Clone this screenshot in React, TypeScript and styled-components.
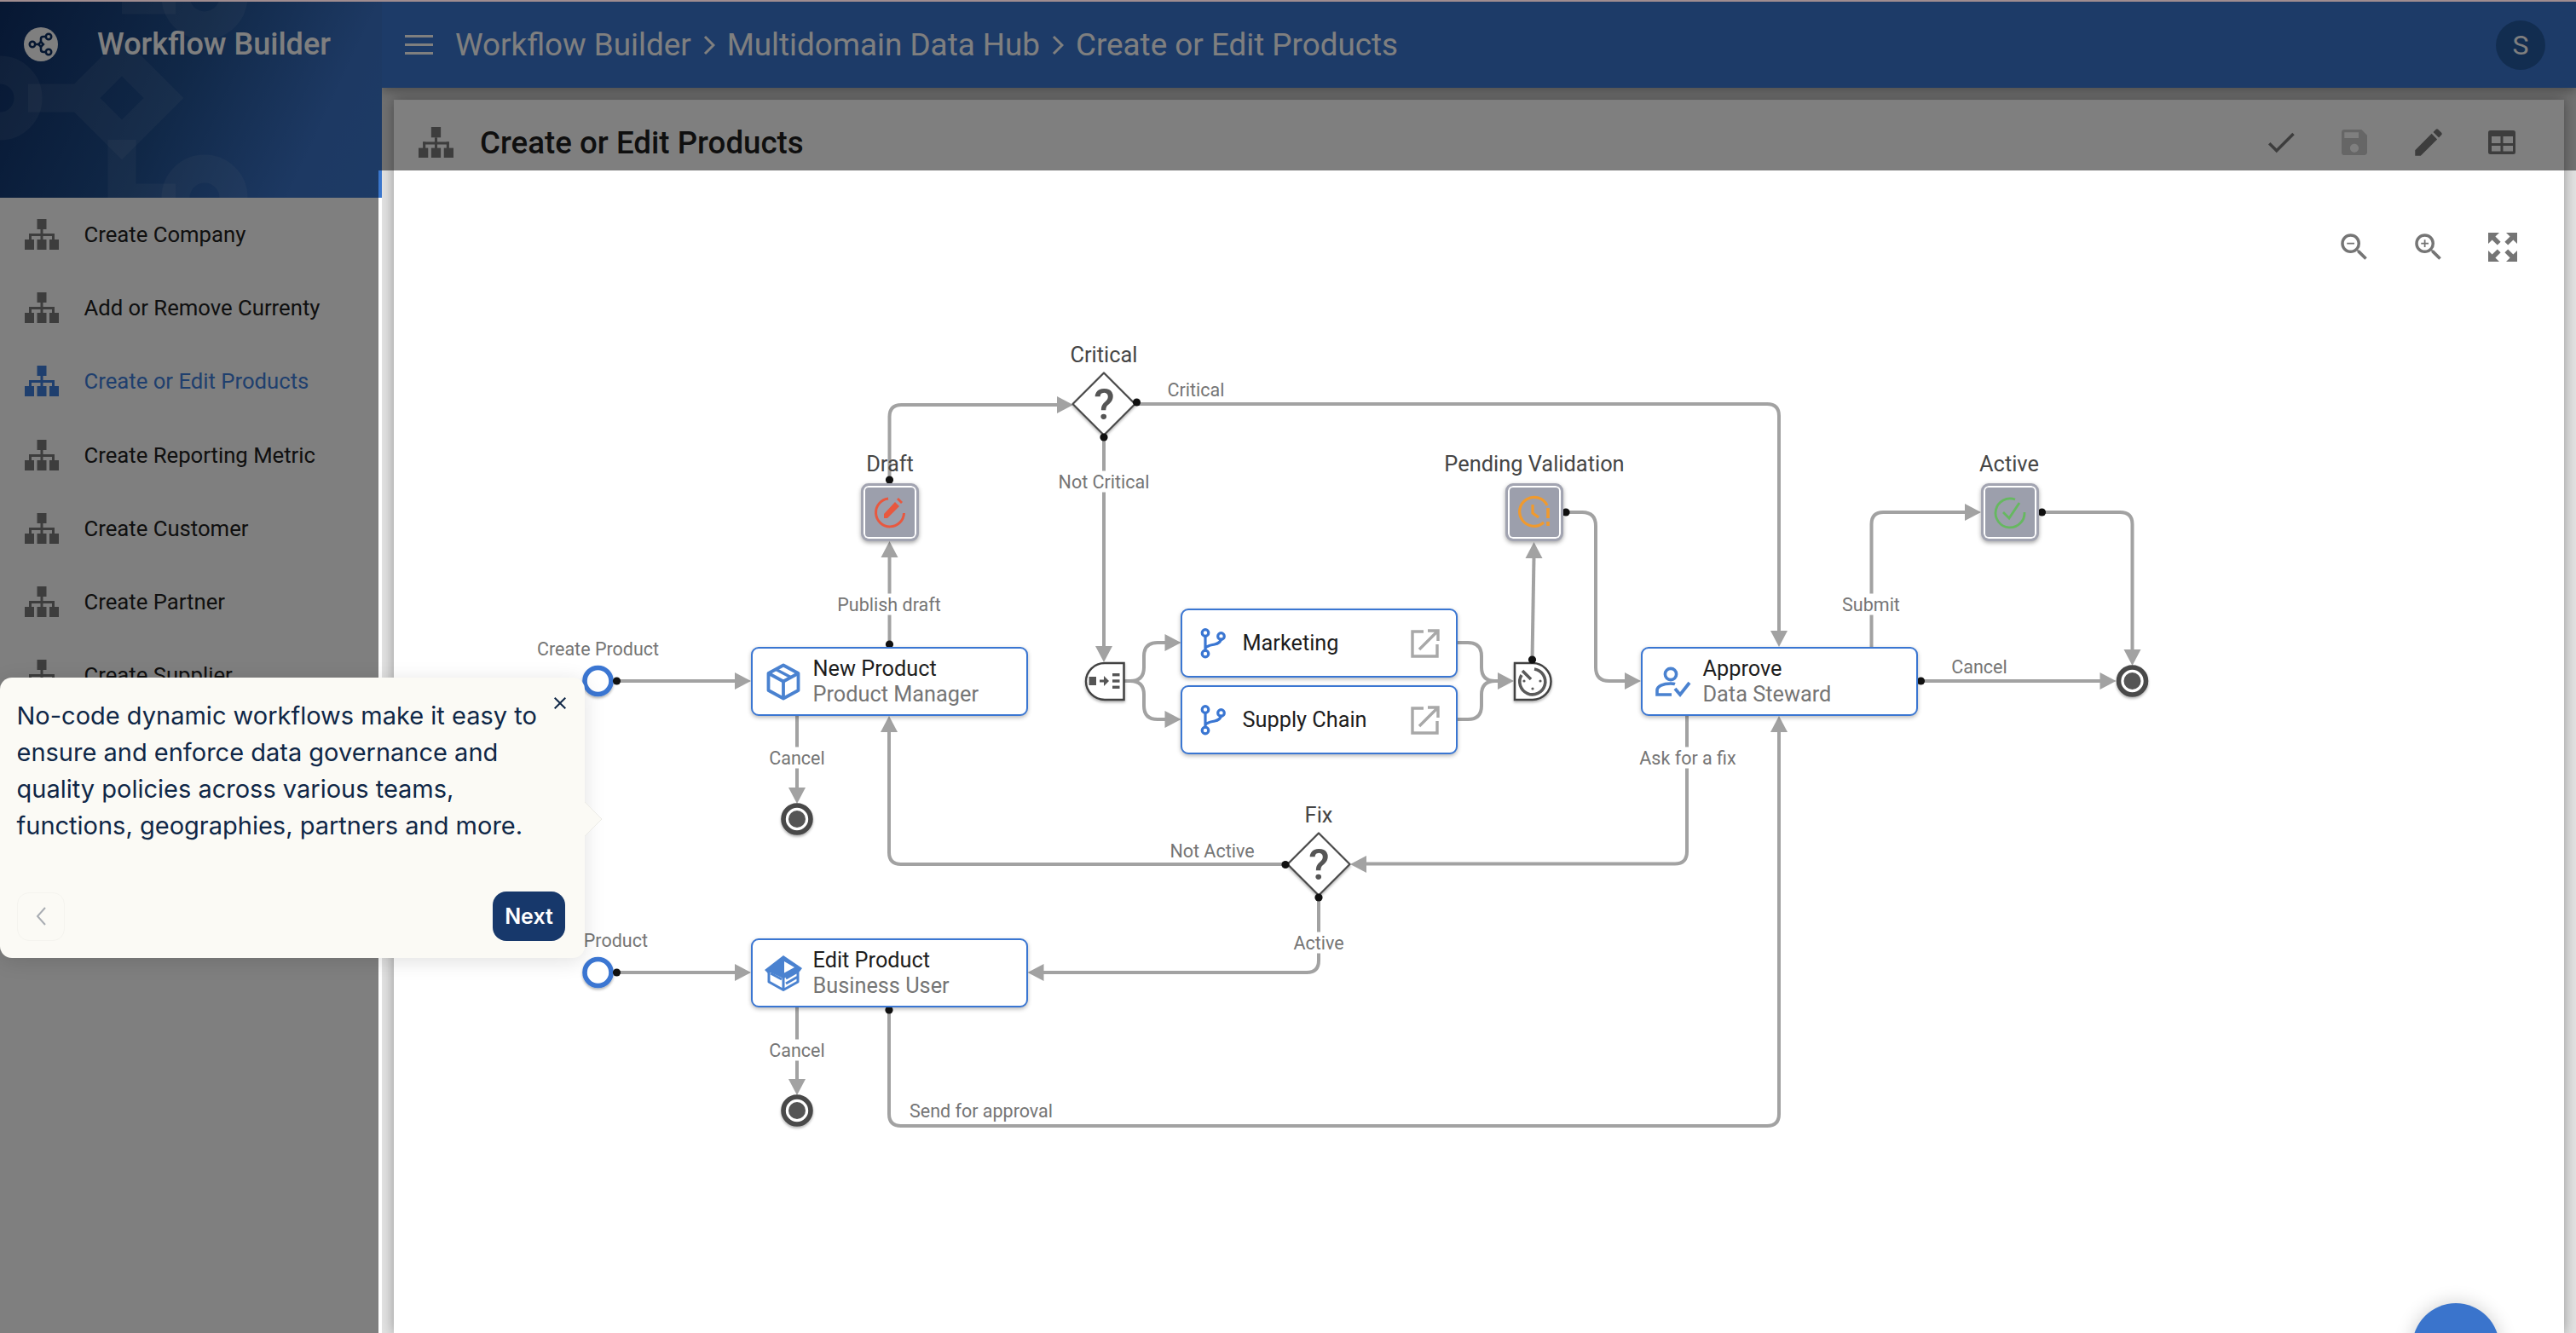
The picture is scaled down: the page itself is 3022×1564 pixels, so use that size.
import React from "react";
import styled, { createGlobalStyle } from "styled-components";
import { MdCheck, MdSave, MdEdit, MdZoomIn, MdZoomOut, MdClose } from "react-icons/md";

const Global = createGlobalStyle`
  html, body { margin: 0; padding: 0; height: 100%; overflow: hidden; background: #e2e2e2; }
  #root { height: 100%; }
  * { box-sizing: border-box; }
`;

const BLUE = "#3a76d2";
const EDGE = "#a2a2a2";
const OX = 462;
const OY = 200;

const Shell = styled.div`
  position: relative;
  display: grid;
  grid-template-columns: 448px 1fr;
  width: 3022px;
  height: 1564px;
  overflow: hidden;
  font-family: Roboto, "Liberation Sans", sans-serif;
  border-top: 2px solid #a08c8f;
`;

const SideColumn = styled.aside`
  display: flex;
  flex-direction: column;
  background: #fff;
  z-index: 2;
`;

const LogoPanel = styled.div`
  position: relative;
  height: 230px;
  overflow: hidden;
  background: linear-gradient(115deg, #0e2f66 0%, #21508f 45%, #3a72c6 80%, #3a76cc 100%);
`;

const LogoPattern = styled.svg`
  position: absolute;
  left: 0;
  top: -2px;
  width: 448px;
  height: 232px;
`;

const Brand = styled.div`
  position: relative;
  display: flex;
  align-items: center;
  height: 100px;
  padding-left: 28px;
  gap: 46px;
  color: #fff;
  font-size: 36px;
  font-weight: 500;
`;

const BrandMark = styled.span`
  display: flex;
  align-items: center;
  justify-content: center;
  width: 40px;
  height: 40px;
  border-radius: 50%;
  background: #fff;
`;

const NavList = styled.nav`
  display: flex;
  flex-direction: column;
  width: 444px;
`;

const NavRow = styled.div<{ $active?: boolean }>`
  display: flex;
  align-items: center;
  height: 86.2px;
  padding-left: 29px;
  gap: 29.5px;
  font-size: 25.7px;
  color: ${(p) => (p.$active ? "#3f7fdc" : "#212121")};
`;

const MainColumn = styled.main`
  display: flex;
  flex-direction: column;
  min-width: 0;
`;

const TopBar = styled.header`
  position: relative;
  z-index: 1;
  display: flex;
  align-items: center;
  height: 101px;
  flex: none;
  padding: 0 36px 0 27px;
  background: #3a76d0;
  color: #fff;
  box-shadow: 0 3px 12px rgba(0, 0, 0, 0.35);
`;

const Burger = styled.span`
  display: flex;
  flex-direction: column;
  gap: 7px;
  width: 33px;
  margin-right: 26px;
  & > i {
    display: block;
    height: 3px;
    background: #fff;
  }
`;

const Crumbs = styled.div`
  display: flex;
  align-items: center;
  flex: 1;
  gap: 14px;
  font-size: 36.8px;
`;

const Avatar = styled.span`
  display: flex;
  align-items: center;
  justify-content: center;
  width: 58px;
  height: 58px;
  border-radius: 50%;
  background: #255aa0;
  font-size: 32px;
`;

const Gutter = styled.div`
  display: flex;
  flex: 1;
  min-height: 0;
  padding: 14px 14px 0;
`;

const Card = styled.section`
  position: relative;
  display: flex;
  flex-direction: column;
  flex: 1;
  background: #fff;
  box-shadow: 0 0 14px rgba(0, 0, 0, 0.35);
`;

const CardHead = styled.div`
  display: flex;
  align-items: center;
  height: 83px;
  flex: none;
  padding: 17px 52px 0 29px;
  gap: 31px;
`;

const CardTitle = styled.h1`
  flex: 1;
  margin: 0;
  font-size: 36.7px;
  font-weight: 500;
  color: #1f1f1f;
`;

const ToolRow = styled.div`
  display: flex;
  align-items: center;
  gap: 44.5px;
`;

const ToolIcon = styled.span<{ $muted?: boolean }>`
  display: flex;
  align-items: center;
  justify-content: center;
  width: 42px;
  height: 42px;
  color: ${(p) => (p.$muted ? "#cdcdcd" : "#7b7b7b")};
`;

const Canvas = styled.div`
  position: relative;
  flex: 1;
`;

const ZoomTools = styled.div`
  position: absolute;
  right: 51px;
  top: 69px;
  display: flex;
  gap: 45px;
  color: #757575;
`;

const Edges = styled.svg`
  position: absolute;
  left: 0;
  top: 0;
  width: 2546px;
  height: 1364px;
`;

const TaskNode = styled.div<{ $x: number; $y: number }>`
  position: absolute;
  left: ${(p) => p.$x - OX}px;
  top: ${(p) => p.$y - OY}px;
  width: 325px;
  height: 81px;
  display: flex;
  align-items: center;
  border: 2.5px solid ${BLUE};
  border-radius: 9px;
  background: #fff;
  box-shadow: 0 2px 5px rgba(0, 0, 0, 0.28);
`;

const TaskIcon = styled.span`
  display: flex;
  align-items: center;
  justify-content: center;
  flex: none;
  width: 68.5px;
  margin-left: 2px;
`;

const TaskText = styled.div`
  display: flex;
  flex-direction: column;
  flex: 1;
  line-height: 29.5px;
`;

const TaskTitle = styled.span`
  font-size: 25.3px;
  color: #1d1d1d;
`;

const TaskRole = styled.span`
  font-size: 25.3px;
  color: #757575;
`;

const OpenIcon = styled.span`
  display: flex;
  margin-right: 19px;
`;

const StatusNode = styled.div<{ $x: number; $y: number }>`
  position: absolute;
  left: ${(p) => p.$x - OX - 34}px;
  top: ${(p) => p.$y - OY - 34}px;
  width: 68px;
  height: 68px;
  display: flex;
  align-items: center;
  justify-content: center;
  border-radius: 9px;
  background: #9c9fac;
  border: 3.5px solid #a2a4b1;
  box-shadow: inset 0 0 0 2px #fff, 0 2px 5px rgba(0, 0, 0, 0.35);
`;

const NodeLabel = styled.span<{ $x: number; $y: number }>`
  position: absolute;
  left: ${(p) => p.$x - OX}px;
  top: ${(p) => p.$y - OY}px;
  transform: translate(-50%, -50%);
  white-space: nowrap;
  font-size: 25.4px;
  line-height: 28px;
  color: #454545;
`;

const EdgeLabel = styled.span<{ $x: number; $y: number; $plain?: boolean }>`
  position: absolute;
  left: ${(p) => p.$x - OX}px;
  top: ${(p) => p.$y - OY}px;
  transform: translate(-50%, -50%);
  white-space: nowrap;
  font-size: 21.5px;
  line-height: 25px;
  color: #757575;
  background: ${(p) => (p.$plain ? "transparent" : "#fff")};
`;

const Fab = styled.span`
  position: absolute;
  left: ${2830 - OX}px;
  top: ${1529 - OY}px;
  width: 102px;
  height: 102px;
  border-radius: 50%;
  background: #3a74cc;
  box-shadow: 0 0 22px rgba(0, 0, 0, 0.2);
`;

const Spotlight = styled.div`
  position: absolute;
  left: 444px;
  top: 198px;
  right: 0;
  bottom: 0;
  z-index: 5;
  pointer-events: none;
  box-shadow: 0 0 0 4000px rgba(0, 0, 0, 0.5);
`;

const TourCard = styled.div`
  position: absolute;
  left: 0;
  top: 793px;
  z-index: 6;
  width: 686px;
  height: 329px;
  padding: 23px 30px 0 19.5px;
  border-radius: 14px;
  background: #fbfaf5;
  box-shadow: 0 4px 24px rgba(0, 0, 0, 0.12);
  font-family: Inter, "Noto Sans", sans-serif;
  color: #0f2747;
`;

const TourText = styled.p`
  margin: 0;
  font-size: 29px;
  line-height: 43px;
`;

const TourClose = styled.span`
  position: absolute;
  right: 17px;
  top: 18px;
  display: flex;
  color: #0f2747;
`;

const TourCaret = styled.svg`
  position: absolute;
  left: 686px;
  top: 144px;
`;

const TourFoot = styled.div`
  position: absolute;
  left: 20px;
  right: 23px;
  top: 251px;
  display: flex;
  align-items: center;
  justify-content: space-between;
`;

const PrevButton = styled.span`
  display: flex;
  align-items: center;
  justify-content: center;
  width: 56px;
  height: 57px;
  border: 1px solid #f5f4ef;
  border-radius: 14px;
  color: #a9adb3;
`;

const NextButton = styled.span`
  display: flex;
  align-items: center;
  justify-content: center;
  width: 85px;
  height: 58px;
  border-radius: 16px;
  background: #17386b;
  color: #fff;
  font-size: 25px;
  font-weight: 600;
`;

const SiteMap = ({ color = "#7b7b7b", size = 40 }: { color?: string; size?: number }) => (
  <svg width={size} height={(size * 36) / 40} viewBox="0 0 40 36" fill={color} style={{ flex: "none" }}>
    <rect x="14.5" y="0" width="11" height="12" />
    <rect x="18.5" y="12" width="3" height="7" />
    <rect x="5" y="17" width="30" height="3" />
    <rect x="5" y="17" width="3" height="8" />
    <rect x="18.5" y="17" width="3" height="8" />
    <rect x="32" y="17" width="3" height="8" />
    <rect x="0" y="24" width="11" height="12" />
    <rect x="14.5" y="24" width="11" height="12" />
    <rect x="29" y="24" width="11" height="12" />
  </svg>
);

const LogoGlyph = () => (
  <svg width="30" height="30" viewBox="0 0 30 30" fill="none" stroke="#0d2f63" strokeWidth="2.6">
    <circle cx="5" cy="15" r="3.2" />
    <circle cx="24" cy="6" r="3.2" />
    <circle cx="24" cy="24" r="3.2" />
    <path d="M8 15h5M15 12.5V8.5q0-2.5 2.5-2.5H21M15 17.5V21q0 3 3 3h3" />
    <path d="M15 12.2l2.8 2.8-2.8 2.8-2.8-2.8z" />
  </svg>
);

const TableGlyph = () => (
  <svg width="32" height="28" viewBox="0 0 32 28" fill="#7b7b7b">
    <path
      fillRule="evenodd"
      d="M2.5 0h27A2.5 2.5 0 0 1 32 2.5v23a2.5 2.5 0 0 1-2.5 2.5h-27A2.5 2.5 0 0 1 0 25.5v-23A2.5 2.5 0 0 1 2.5 0zM4 7v8h10.5V7zM17.5 7v8H29V7zM4 18v6.5h10.5V18zM17.5 18v6.5H29V18z"
    />
  </svg>
);

const ExpandGlyph = () => (
  <svg width="34" height="34" viewBox="0 0 34 34" fill="#757575">
    <path d="M0 0h13l-4.6 4.6 6.2 6.2-3.8 3.8-6.2-6.2L0 13zM34 0v13l-4.6-4.6-6.2 6.2-3.8-3.8 6.2-6.2L21 0zM0 34V21l4.6 4.6 6.2-6.2 3.8 3.8-6.2 6.2L13 34zM34 34H21l4.6-4.6-6.2-6.2 3.8-3.8 6.2 6.2L34 21z" />
  </svg>
);

const BoxIcon = () => (
  <svg width="40" height="44" viewBox="0 0 40 44" fill="none" stroke="#4a82d0" strokeWidth="3.8" strokeLinejoin="round">
    <path d="M20 2.5 37.5 12v20L20 41.5 2.5 32V12z" />
    <path d="M2.5 12 20 21.5 37.5 12M20 21.5v20" />
    <path d="M11.5 7.5 28.5 16.5" strokeWidth="3.4" />
  </svg>
);

const BoxEditIcon = () => (
  <svg width="44" height="42" viewBox="0 0 44 42" fill="none">
    <path d="M22 0 44 15 41 19 22 27 7 20 4 21 0 17Z" fill="#4a82d0" />
    <path d="M23 7 35 14 23 20.5Z" fill="#fff" />
    <path d="M5 18V31L22 40.5 39 31V18M22 24V40.5M25 27 38 19.5M25 33 38 25.5" stroke="#4a82d0" strokeWidth="3" strokeLinejoin="round" />
    <path d="M7 21 20 28" stroke="#4a82d0" strokeWidth="2.6" />
  </svg>
);

const ApproverIcon = () => (
  <svg width="42" height="36" viewBox="0 0 42 36" fill="none" stroke="#4a82d0" strokeWidth="3.6">
    <circle cx="18" cy="9" r="6.6" />
    <path d="M19 33H2v-5c0-5 7-8 16-8 2 0 4 .2 5 .6" />
    <path d="M23 26l6 7 11-14" strokeWidth="3.8" />
  </svg>
);

const BranchIcon = () => (
  <svg width="30" height="36" viewBox="0 0 30 36" fill="none" stroke={BLUE} strokeWidth="3.2">
    <circle cx="6" cy="5.5" r="3.8" />
    <circle cx="6" cy="30" r="3.8" />
    <circle cx="24.5" cy="9.5" r="3.8" />
    <path d="M6 9.5V26M6 23.5c3-3.5 7-3.5 11-4.5 5-1 7-4 7.5-6" strokeLinecap="round" />
  </svg>
);

const ExternalIcon = () => (
  <svg width="34" height="34" viewBox="0 0 34 34" fill="none" stroke="#a8a8a8" strokeWidth="3.4">
    <path d="M15 3H2v29h29V18" />
    <path d="M10 24 31 3M20 2h12v12" />
  </svg>
);

const Status = ({ kind }: { kind: "draft" | "pending" | "active" }) => {
  if (kind === "draft")
    return (
      <svg width="40" height="40" viewBox="0 0 40 40" fill="none" stroke="#e8583f" strokeWidth="3">
        <path d="M18 4A16.5 16.5 0 1 0 36.5 21" />
        <path d="M13 27v-5L26 8l5 5-14 14z" fill="#e8583f" stroke="none" />
        <path d="M28 5l2-2 5 5-2 2z" fill="#e8583f" stroke="none" />
      </svg>
    );
  if (kind === "pending")
    return (
      <svg width="40" height="40" viewBox="0 0 40 40" fill="none" stroke="#f09a2e" strokeWidth="3.2">
        <path d="M31 32A17 17 0 1 1 35 12" />
        <path d="M18 11v10l7 5" />
        <path d="M36 15v12M36 31v5" strokeWidth="3.6" />
      </svg>
    );
  return (
    <svg width="40" height="40" viewBox="0 0 40 40" fill="none" stroke="#66b860" strokeWidth="2.8">
      <path d="M26 5A17 17 0 1 0 37 20" />
      <path d="M12 20l7 7L31 9" />
    </svg>
  );
};

const Arrow = ({ x, y, d }: { x: number; y: number; d: "r" | "l" | "u" | "d" }) => {
  const p =
    d === "r"
      ? `${x},${y} ${x - 19},${y - 10} ${x - 19},${y + 10}`
      : d === "l"
      ? `${x},${y} ${x + 19},${y - 10} ${x + 19},${y + 10}`
      : d === "u"
      ? `${x},${y} ${x - 10},${y + 19} ${x + 10},${y + 19}`
      : `${x},${y} ${x - 10},${y - 19} ${x + 10},${y - 19}`;
  return <polygon points={p} fill={EDGE} />;
};

const Dot = ({ x, y }: { x: number; y: number }) => <circle cx={x} cy={y} r="4.6" fill="#111" />;

const GateMark = styled.text`
  font-family: Roboto, "Liberation Sans", sans-serif;
  font-size: 50px;
  font-weight: 500;
  fill: #555;
  text-anchor: middle;
`;

const Gate = ({ x, y }: { x: number; y: number }) => (
  <g>
    <path
      d={`M${x - 36.5} ${y} L${x} ${y - 36.5} L${x + 36.5} ${y} L${x} ${y + 36.5} Z`}
      fill="#fff"
      stroke="#4a4a4a"
      strokeWidth="2.2"
      strokeLinejoin="round"
      filter="url(#soft)"
    />
    <GateMark x={x + 0.5} y={y + 18}>
      ?
    </GateMark>
  </g>
);

const StartEvent = ({ x, y }: { x: number; y: number }) => (
  <circle cx={x} cy={y} r="15.5" fill="#fff" stroke={BLUE} strokeWidth="5.6" filter="url(#soft)" />
);

const EndEvent = ({ x, y }: { x: number; y: number }) => (
  <g filter="url(#soft)">
    <circle cx={x} cy={y} r="16" fill="#fff" stroke="#484848" strokeWidth="5.6" />
    <circle cx={x} cy={y} r="10" fill="#555" />
  </g>
);

const EDGE_PATHS = [
  "M724 799H864",
  "M724 1141H864",
  "M1043.5 756V654",
  "M1043.5 563V489Q1043.5 475 1057.5 475H1242",
  "M1295 513V760",
  "M1333 474H2073Q2087 474 2087 488V742",
  "M1319 799H1326Q1342 799 1342 783V770Q1342 754 1358 754H1368",
  "M1319 799H1326Q1342 799 1342 815V828Q1342 844 1358 844H1368",
  "M1710 754H1722Q1738 754 1738 770V783Q1738 799 1754 799H1760",
  "M1710 844H1722Q1738 844 1738 828V815Q1738 799 1754 799H1760",
  "M1797.5 774L1799.5 653",
  "M1837 601H1856Q1872 601 1872 617V783Q1872 799 1888 799H1908",
  "M2195.5 759V615Q2195.5 601 2209.5 601H2306",
  "M2395.5 601H2487Q2501.5 601 2501.5 615V764",
  "M2254 799H2466",
  "M1979 840V999Q1979 1013.5 1965 1013.5H1600",
  "M1508 1014H1057Q1043 1014 1043 1000V856",
  "M1547 1053V1127Q1547 1141 1533 1141H1222",
  "M935 840V926",
  "M935 1182V1268",
  "M1043 1185V1307Q1043 1321 1057 1321H2073Q2087 1321 2087 1307V856",
];

const LABELS = [
  { x: 1295, y: 416, t: "Critical" },
  { x: 1044, y: 544, t: "Draft" },
  { x: 1800, y: 544, t: "Pending Validation" },
  { x: 2357, y: 544, t: "Active" },
  { x: 1547, y: 956, t: "Fix" },
];

const EDGE_LABELS = [
  { x: 701.5, y: 761, t: "Create Product", plain: true },
  { x: 701.5, y: 1103, t: "Edit Product", plain: true },
  { x: 1403, y: 457, t: "Critical", plain: true },
  { x: 1295, y: 565, t: "Not Critical" },
  { x: 1043, y: 709, t: "Publish draft" },
  { x: 2195, y: 709, t: "Submit" },
  { x: 2322, y: 782, t: "Cancel", plain: true },
  { x: 935, y: 889, t: "Cancel" },
  { x: 1980, y: 889, t: "Ask for a fix" },
  { x: 1422, y: 998, t: "Not Active", plain: true },
  { x: 1547, y: 1105.5, t: "Active" },
  { x: 935, y: 1231.5, t: "Cancel" },
  { x: 1151, y: 1303, t: "Send for approval", plain: true },
];

const NAV = [
  "Create Company",
  "Add or Remove Currenty",
  "Create or Edit Products",
  "Create Reporting Metric",
  "Create Customer",
  "Create Partner",
  "Create Supplier",
];

export default function App() {
  return (
    <Shell>
      <Global />
      <SideColumn>
        <LogoPanel>
          <LogoPattern viewBox="0 0 448 232" fill="none" stroke="rgba(255,255,255,0.07)" strokeWidth="33">
            <circle cx="0" cy="115" r="33" />
            <path d="M33 115H94L143 66L192 115L143 164L94 115" />
            <path d="M143 164V232H206" />
            <circle cx="240" cy="232" r="34" />
            <path d="M143 0H206" />
            <circle cx="240" cy="-4" r="34" />
          </LogoPattern>
          <Brand>
            <BrandMark>
              <LogoGlyph />
            </BrandMark>
            Workflow Builder
          </Brand>
        </LogoPanel>
        <NavList>
          {NAV.map((n, i) => (
            <NavRow key={n} $active={i === 2}>
              <SiteMap color={i === 2 ? "#3f7fdc" : "#7b7b7b"} />
              {n}
            </NavRow>
          ))}
        </NavList>
      </SideColumn>
      <MainColumn>
        <TopBar>
          <Burger>
            <i />
            <i />
            <i />
          </Burger>
          <Crumbs>
            <span>Workflow Builder</span>
            <Chevron />
            <span>Multidomain Data Hub</span>
            <Chevron />
            <span>Create or Edit Products</span>
          </Crumbs>
          <Avatar>S</Avatar>
        </TopBar>
        <Gutter>
          <Card>
            <CardHead>
              <SiteMap size={41} />
              <CardTitle>Create or Edit Products</CardTitle>
              <ToolRow>
                <ToolIcon>
                  <MdCheck size={42} />
                </ToolIcon>
                <ToolIcon $muted>
                  <MdSave size={40} />
                </ToolIcon>
                <ToolIcon>
                  <MdEdit size={42} />
                </ToolIcon>
                <ToolIcon>
                  <TableGlyph />
                </ToolIcon>
              </ToolRow>
            </CardHead>
            <Canvas>
              <Edges viewBox={`${OX} ${OY} 2546 1364`} fill="none">
                <defs>
                  <filter id="soft" x="-30%" y="-30%" width="160%" height="170%">
                    <feDropShadow dx="0" dy="2" stdDeviation="1.8" floodColor="#000" floodOpacity="0.3" />
                  </filter>
                </defs>
                {EDGE_PATHS.map((d) => (
                  <path key={d} d={d} stroke={EDGE} strokeWidth="4" />
                ))}
                <Arrow x={881} y={799} d="r" />
                <Arrow x={881} y={1141} d="r" />
                <Arrow x={1043.5} y={635} d="u" />
                <Arrow x={1259} y={475} d="r" />
                <Arrow x={1295} y={777} d="d" />
                <Arrow x={2087} y={759} d="d" />
                <Arrow x={2087} y={840} d="u" />
                <Arrow x={1043} y={840} d="u" />
                <Arrow x={1385.5} y={754} d="r" />
                <Arrow x={1385.5} y={844} d="r" />
                <Arrow x={1776} y={799} d="r" />
                <Arrow x={1799.5} y={636} d="u" />
                <Arrow x={1925} y={799} d="r" />
                <Arrow x={2324} y={601} d="r" />
                <Arrow x={2501.5} y={781} d="d" />
                <Arrow x={2482.5} y={799} d="r" />
                <Arrow x={1584} y={1014} d="l" />
                <Arrow x={1205.5} y={1141} d="l" />
                <Arrow x={935} y={943} d="d" />
                <Arrow x={935} y={1285} d="d" />
                <StartEvent x={701.5} y={799} />
                <StartEvent x={701.5} y={1141} />
                <EndEvent x={935} y={961} />
                <EndEvent x={935} y={1303} />
                <EndEvent x={2501.5} y={799} />
                <Gate x={1295} y={474} />
                <Gate x={1547} y={1014} />
                <g filter="url(#soft)">
                  <path d="M1318.5 778H1296a22 21.5 0 0 0 0 43H1318.5Z" fill="#fff" stroke="#424242" strokeWidth="2.5" />
                  <path d="M1777 778H1798a21.5 21.5 0 0 1 0 43H1777Z" fill="#fff" stroke="#424242" strokeWidth="2.5" />
                </g>
                <g fill="#555">
                  <rect x="1277.5" y="794" width="8.5" height="10" />
                  <rect x="1290" y="797.5" width="6" height="3" />
                  <path d="M1295 793l6 6-6 6z" />
                  <rect x="1305" y="790" width="8.5" height="3.4" />
                  <rect x="1305" y="797.3" width="8.5" height="3.4" />
                  <rect x="1305" y="804.6" width="8.5" height="3.4" />
                </g>
                <g fill="none" stroke="#5a5a5a" strokeWidth="3.6">
                  <path d="M1800 785a15 15 0 1 1-15 7M1786 787l10 10" />
                </g>
                <g fill="#5a5a5a">
                  <circle cx="1788" cy="799" r="1.6" />
                  <circle cx="1798" cy="808" r="1.6" />
                  <circle cx="1807" cy="799" r="1.6" />
                </g>
                <Dot x={723.5} y={799} />
                <Dot x={723.5} y={1141} />
                <Dot x={1043.5} y={756} />
                <Dot x={1043.5} y={563} />
                <Dot x={1295} y={513} />
                <Dot x={1333.5} y={472} />
                <Dot x={1797.5} y={774} />
                <Dot x={1837} y={601} />
                <Dot x={2395.5} y={601} />
                <Dot x={2253.5} y={799} />
                <Dot x={1508} y={1014.5} />
                <Dot x={1547} y={1053} />
                <Dot x={1043} y={1185} />
              </Edges>

              <TaskNode $x={881} $y={759}>
                <TaskIcon>
                  <BoxIcon />
                </TaskIcon>
                <TaskText>
                  <TaskTitle>New Product</TaskTitle>
                  <TaskRole>Product Manager</TaskRole>
                </TaskText>
              </TaskNode>
              <TaskNode $x={881} $y={1101}>
                <TaskIcon>
                  <BoxEditIcon />
                </TaskIcon>
                <TaskText>
                  <TaskTitle>Edit Product</TaskTitle>
                  <TaskRole>Business User</TaskRole>
                </TaskText>
              </TaskNode>
              <TaskNode $x={1385} $y={714}>
                <TaskIcon>
                  <BranchIcon />
                </TaskIcon>
                <TaskText>
                  <TaskTitle>Marketing</TaskTitle>
                </TaskText>
                <OpenIcon>
                  <ExternalIcon />
                </OpenIcon>
              </TaskNode>
              <TaskNode $x={1385} $y={804}>
                <TaskIcon>
                  <BranchIcon />
                </TaskIcon>
                <TaskText>
                  <TaskTitle>Supply Chain</TaskTitle>
                </TaskText>
                <OpenIcon>
                  <ExternalIcon />
                </OpenIcon>
              </TaskNode>
              <TaskNode $x={1925} $y={759}>
                <TaskIcon>
                  <ApproverIcon />
                </TaskIcon>
                <TaskText>
                  <TaskTitle>Approve</TaskTitle>
                  <TaskRole>Data Steward</TaskRole>
                </TaskText>
              </TaskNode>

              <StatusNode $x={1043.5} $y={601}>
                <Status kind="draft" />
              </StatusNode>
              <StatusNode $x={1799.5} $y={601}>
                <Status kind="pending" />
              </StatusNode>
              <StatusNode $x={2357.5} $y={601}>
                <Status kind="active" />
              </StatusNode>

              {LABELS.map((l) => (
                <NodeLabel key={l.t} $x={l.x} $y={l.y}>
                  {l.t}
                </NodeLabel>
              ))}
              {EDGE_LABELS.map((l) => (
                <EdgeLabel key={`${l.t}${l.y}`} $x={l.x} $y={l.y} $plain={l.plain}>
                  {l.t}
                </EdgeLabel>
              ))}

              <ZoomTools>
                <MdZoomOut size={42} />
                <MdZoomIn size={42} />
                <ToolIcon>
                  <ExpandGlyph />
                </ToolIcon>
              </ZoomTools>
              <Fab />
            </Canvas>
          </Card>
        </Gutter>
      </MainColumn>
      <Spotlight />
      <TourCard>
        <TourText>
          No-code dynamic workflows make it easy to ensure and enforce data governance and quality policies across
          various teams, functions, geographies, partners and more.
        </TourText>
        <TourClose>
          <MdClose size={24} />
        </TourClose>
        <TourCaret width="22" height="44" viewBox="0 0 22 44">
          <path d="M0 2 20 22 0 42" fill="#fbfaf5" stroke="#ecebe6" strokeWidth="1" />
        </TourCaret>
        <TourFoot>
          <PrevButton>
            <svg width="14" height="24" viewBox="0 0 14 24" fill="none" stroke="currentColor" strokeWidth="2">
              <path d="M12 2 3 12l9 10" />
            </svg>
          </PrevButton>
          <NextButton>Next</NextButton>
        </TourFoot>
      </TourCard>
    </Shell>
  );
}

function Chevron() {
  return (
    <svg width="14" height="24" viewBox="0 0 14 24" fill="none" stroke="currentColor" strokeWidth="3">
      <path d="M2 2l10 10L2 22" />
    </svg>
  );
}
